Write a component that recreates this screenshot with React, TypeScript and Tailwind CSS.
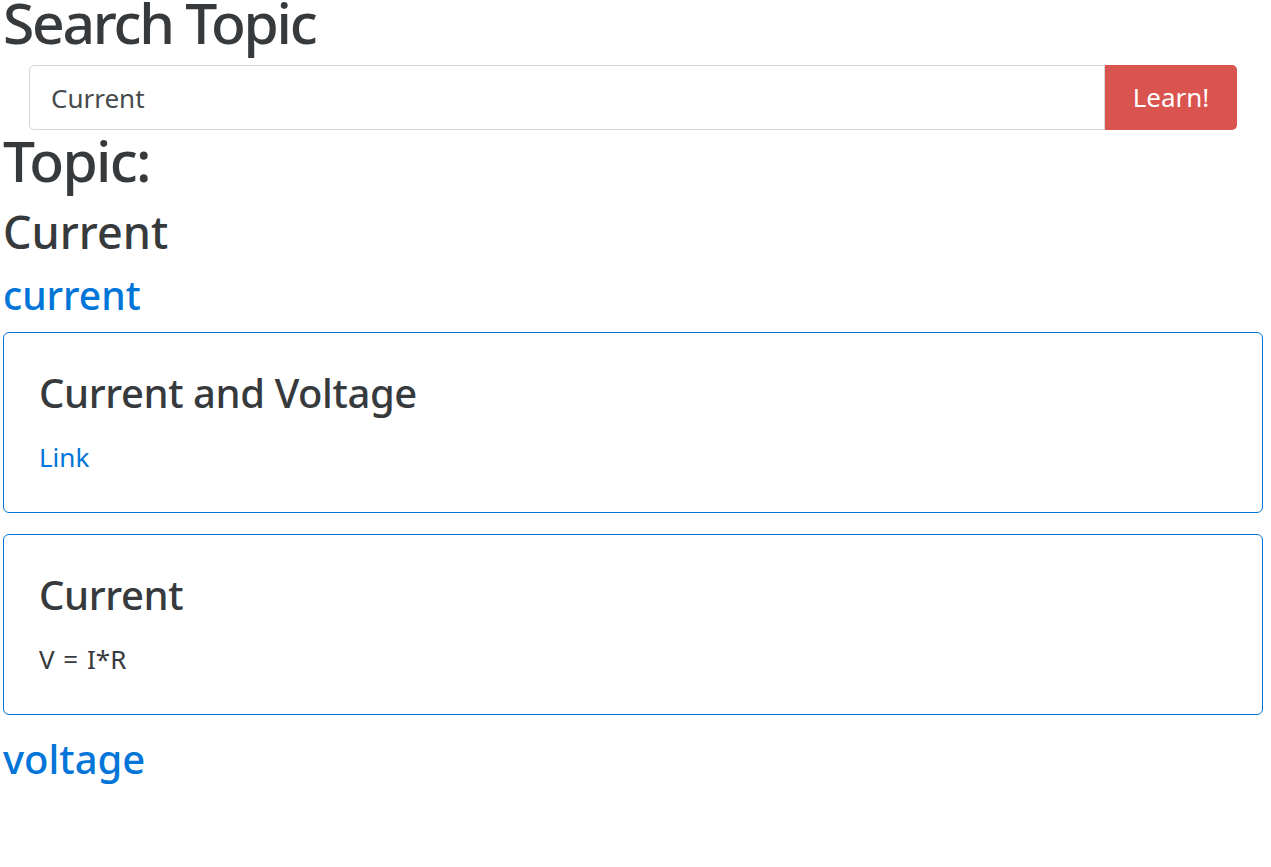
export default function App() {
  return (
    <div
      className="min-h-screen bg-white pl-[3px] pr-[8px] font-medium text-[#373a3c]"
      style={{ fontFamily: '"Noto Sans", "Open Sans", sans-serif' }}
    >
      <h1 className="text-[57px] leading-[44px] tracking-[-0.04em]">Search Topic</h1>

      <div className="mx-[26px] mt-[21px] flex h-[65px]">
        <input
          readOnly
          value="Current"
          className="h-full flex-1 rounded-l-[5px] border border-[#d6d6d6] px-[21px] text-[26px] font-normal text-[#464a4c] outline-none"
        />
        <button className="h-full w-[132px] rounded-r-[5px] bg-[#d9534f] text-[26px] font-normal text-white">
          Learn!
        </button>
      </div>

      <h1 className="mt-[2px] text-[57px] leading-[57px] tracking-[-0.03em]">Topic:</h1>
      <h2 className="mt-[18px] text-[45px] leading-[50px]">Current</h2>
      <h3 className="mt-[14px] text-[39px] leading-[48px] text-[#0275d8]">current</h3>

      <div className="mt-[13px] flex flex-col gap-[21px]">
        <div className="h-[181px] rounded-[6px] border border-[#0275d8] px-[35px] pt-[36px]">
          <h3 className="text-[40px] leading-[48px] tracking-[-0.01em]">Current and Voltage</h3>
          <a className="mt-[22px] block text-[26px] font-normal leading-[36px] text-[#0275d8]">Link</a>
        </div>
        <div className="h-[181px] rounded-[6px] border border-[#0275d8] px-[35px] pt-[36px]">
          <h3 className="text-[40px] leading-[48px] tracking-[-0.01em]">Current</h3>
          <p className="mt-[22px] text-[26px] font-normal leading-[36px] [word-spacing:2px]">V = I*R</p>
        </div>
      </div>

      <h3 className="mt-[20px] text-[40px] leading-[48px] text-[#0275d8]">voltage</h3>
    </div>
  );
}
